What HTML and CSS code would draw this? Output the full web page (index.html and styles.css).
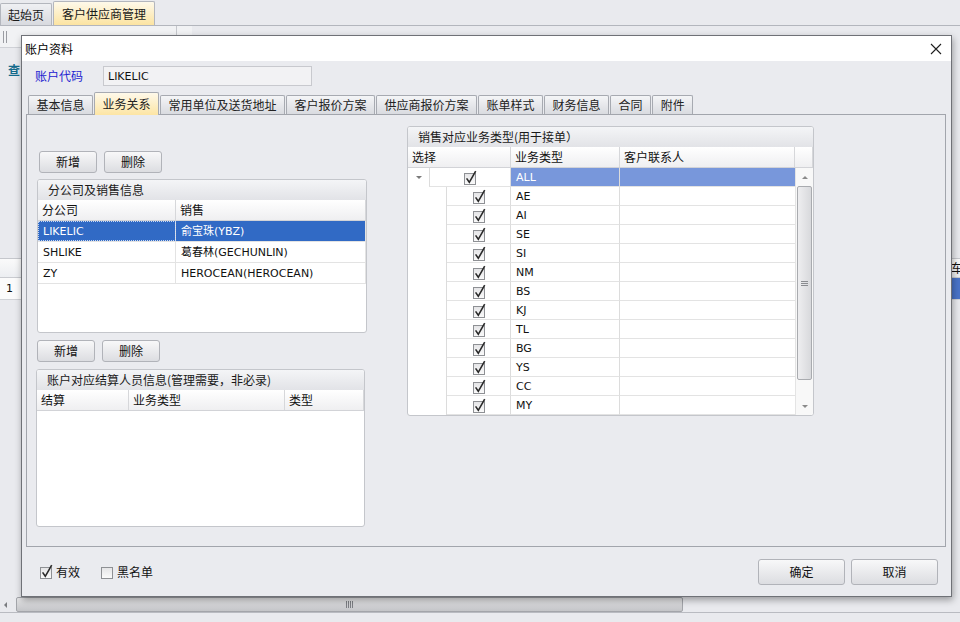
FILE: index.html
```html
<!doctype html>
<html lang="zh-CN">
  <head>
    <meta charset="utf-8" />
    <meta name="viewport" content="width=device-width, initial-scale=1.0" />
    <title>账户资料</title>
    <link rel="stylesheet" href="styles.css">
  </head>

  <body>
    <svg class="svg_defs" width="0" height="0" aria-hidden="true">
      <defs>
        <linearGradient id="box_fill" x1="0" y1="0" x2="0" y2="1">
          <stop offset="0" stop-color="#e4e4e6" />
          <stop offset="1" stop-color="#fbfbfb" />
        </linearGradient>
        <symbol id="chk_on" viewBox="0 0 14 15">
          <rect x="1.5" y="3.5" width="11" height="11" fill="url(#box_fill)" stroke="#8e9094" />
          <path d="M3.6 8.4 L6.3 12.3 L12.7 1.2" fill="none" stroke="#2a2a2a" stroke-width="1.6" />
        </symbol>
        <symbol id="chk_off" viewBox="0 0 14 15">
          <rect x="1.5" y="3.5" width="11" height="11" fill="url(#box_fill)" stroke="#8e9094" />
        </symbol>
      </defs>
    </svg>

    <!-- 뒤쪽 메인 화면 -->
    <div class="app">
      <div class="app_tabs">
        <div class="app_tab">起始页</div>
        <div class="app_tab app_tab_active">客户供应商管理</div>
      </div>
      <div class="app_toolbar">
        <div class="toolbar_strip">
          <span class="toolbar_grip"></span>
          <span class="toolbar_sep"></span>
        </div>
      </div>
      <div class="app_query"><span class="query_link">查</span></div>
      <div class="app_grid">
        <div class="app_grid_head"><span>车</span></div>
        <div class="app_grid_row">
          <span class="app_row_no latin">1</span>
          <span class="app_grid_sel"></span>
        </div>
      </div>
      <div class="app_hscroll">
        <div class="hscroll_arrow"></div>
        <div class="hscroll_thumb"><span class="hscroll_grip"></span></div>
      </div>
      <div class="app_status"></div>
    </div>

    <!-- 账户资料 dialog -->
    <div class="dialog">
      <div class="dialog_title">
        <span>账户资料</span>
        <svg class="dialog_close" width="12" height="12" viewBox="0 0 12 12">
          <path d="M1 1 L11 11 M11 1 L1 11" stroke="#1e1e1e" stroke-width="1.1" fill="none" />
        </svg>
      </div>

      <div class="dialog_body">
        <div class="acct_row">
          <div class="acct_label">账户代码</div>
          <div class="acct_input latin">LIKELIC</div>
        </div>

        <div class="tabs">
          <div class="tab">基本信息</div>
          <div class="tab tab_active">业务关系</div>
          <div class="tab">常用单位及送货地址</div>
          <div class="tab">客户报价方案</div>
          <div class="tab">供应商报价方案</div>
          <div class="tab">账单样式</div>
          <div class="tab">财务信息</div>
          <div class="tab">合同</div>
          <div class="tab">附件</div>
        </div>

        <div class="tab_panel">
          <div class="left_col">
            <div class="btn_row">
              <div class="btn">新增</div>
              <div class="btn">删除</div>
            </div>

            <div class="group group_branch">
              <div class="group_caption">分公司及销售信息</div>
              <div class="grid_head">
                <div class="cell col_branch">分公司</div>
                <div class="cell col_sales">销售</div>
              </div>
              <div class="grid_row row_selected">
                <div class="cell col_branch cell_focus latin">LIKELIC</div>
                <div class="cell col_sales latin">俞宝珠(YBZ)</div>
              </div>
              <div class="grid_row">
                <div class="cell col_branch latin">SHLIKE</div>
                <div class="cell col_sales latin">葛春林(GECHUNLIN)</div>
              </div>
              <div class="grid_row">
                <div class="cell col_branch latin">ZY</div>
                <div class="cell col_sales latin">HEROCEAN(HEROCEAN)</div>
              </div>
            </div>

            <div class="btn_row btn_row_lower">
              <div class="btn">新增</div>
              <div class="btn">删除</div>
            </div>

            <div class="group group_settle">
              <div class="group_caption">账户对应结算人员信息(管理需要，非必录)</div>
              <div class="grid_head">
                <div class="cell col_settle">结算</div>
                <div class="cell col_biz">业务类型</div>
                <div class="cell col_kind">类型</div>
              </div>
            </div>
          </div>

          <div class="group group_types">
            <div class="group_caption caption_tall">销售对应业务类型(用于接单）</div>
            <div class="grid_head">
              <div class="cell col_pick">选择</div>
              <div class="cell col_type">业务类型</div>
              <div class="cell col_contact">客户联系人</div>
              <div class="cell col_vscroll"></div>
            </div>
            <div class="types_body">
              <div class="types_rows">
                <div class="type_row type_selected">
                  <div class="pick_expander"><span class="expander_arrow"></span></div>
                  <div class="pick_box"><svg width="14" height="15"><use href="#chk_on" /></svg></div>
                  <div class="cell col_type latin">ALL</div>
                  <div class="cell col_contact"></div>
                </div>
                <div class="type_row">
                  <div class="pick_indent"></div>
                  <div class="pick_box pick_child"><svg width="14" height="15"><use href="#chk_on" /></svg></div>
                  <div class="cell col_type latin">AE</div>
                  <div class="cell col_contact"></div>
                </div>
                <div class="type_row">
                  <div class="pick_indent"></div>
                  <div class="pick_box pick_child"><svg width="14" height="15"><use href="#chk_on" /></svg></div>
                  <div class="cell col_type latin">AI</div>
                  <div class="cell col_contact"></div>
                </div>
                <div class="type_row">
                  <div class="pick_indent"></div>
                  <div class="pick_box pick_child"><svg width="14" height="15"><use href="#chk_on" /></svg></div>
                  <div class="cell col_type latin">SE</div>
                  <div class="cell col_contact"></div>
                </div>
                <div class="type_row">
                  <div class="pick_indent"></div>
                  <div class="pick_box pick_child"><svg width="14" height="15"><use href="#chk_on" /></svg></div>
                  <div class="cell col_type latin">SI</div>
                  <div class="cell col_contact"></div>
                </div>
                <div class="type_row">
                  <div class="pick_indent"></div>
                  <div class="pick_box pick_child"><svg width="14" height="15"><use href="#chk_on" /></svg></div>
                  <div class="cell col_type latin">NM</div>
                  <div class="cell col_contact"></div>
                </div>
                <div class="type_row">
                  <div class="pick_indent"></div>
                  <div class="pick_box pick_child"><svg width="14" height="15"><use href="#chk_on" /></svg></div>
                  <div class="cell col_type latin">BS</div>
                  <div class="cell col_contact"></div>
                </div>
                <div class="type_row">
                  <div class="pick_indent"></div>
                  <div class="pick_box pick_child"><svg width="14" height="15"><use href="#chk_on" /></svg></div>
                  <div class="cell col_type latin">KJ</div>
                  <div class="cell col_contact"></div>
                </div>
                <div class="type_row">
                  <div class="pick_indent"></div>
                  <div class="pick_box pick_child"><svg width="14" height="15"><use href="#chk_on" /></svg></div>
                  <div class="cell col_type latin">TL</div>
                  <div class="cell col_contact"></div>
                </div>
                <div class="type_row">
                  <div class="pick_indent"></div>
                  <div class="pick_box pick_child"><svg width="14" height="15"><use href="#chk_on" /></svg></div>
                  <div class="cell col_type latin">BG</div>
                  <div class="cell col_contact"></div>
                </div>
                <div class="type_row">
                  <div class="pick_indent"></div>
                  <div class="pick_box pick_child"><svg width="14" height="15"><use href="#chk_on" /></svg></div>
                  <div class="cell col_type latin">YS</div>
                  <div class="cell col_contact"></div>
                </div>
                <div class="type_row">
                  <div class="pick_indent"></div>
                  <div class="pick_box pick_child"><svg width="14" height="15"><use href="#chk_on" /></svg></div>
                  <div class="cell col_type latin">CC</div>
                  <div class="cell col_contact"></div>
                </div>
                <div class="type_row">
                  <div class="pick_indent"></div>
                  <div class="pick_box pick_child"><svg width="14" height="15"><use href="#chk_on" /></svg></div>
                  <div class="cell col_type latin">MY</div>
                  <div class="cell col_contact"></div>
                </div>
              </div>
              <div class="vscroll">
                <div class="vscroll_up"></div>
                <div class="vscroll_thumb"><span class="vscroll_grip"></span></div>
                <div class="vscroll_track"></div>
                <div class="vscroll_down"></div>
              </div>
            </div>
          </div>
        </div>

        <div class="dialog_footer">
          <div class="check_item">
            <svg width="14" height="15"><use href="#chk_on" /></svg>
            <span>有效</span>
          </div>
          <div class="check_item">
            <svg width="14" height="15"><use href="#chk_off" /></svg>
            <span>黑名单</span>
          </div>
          <div class="footer_btns">
            <div class="btn btn_large">确定</div>
            <div class="btn btn_large">取消</div>
          </div>
        </div>
      </div>
    </div>
  </body>
</html>
```

FILE: styles.css
```css
* {
  box-sizing: border-box;
}

body {
  margin: 0;
  width: 960px;
  height: 622px;
  overflow: hidden;
  position: relative;
  background-color: #e9eaee;
  font-family: "Noto Sans CJK SC", sans-serif;
  font-size: 12px;
  line-height: 1;
  color: #111;
}

.svg_defs {
  position: absolute;
  width: 0;
  height: 0;
}

/* 영문 데이터는 Tahoma 비슷하게 */
.latin {
  font-family: "DejaVu Sans", "Noto Sans CJK SC", sans-serif;
  font-size: 11px;
}

/* ===== background app ===== */
.app {
  display: flex;
  flex-direction: column;
  height: 622px;
}

.app_tabs {
  display: flex;
  align-items: flex-end;
  height: 26px;
  flex: none;
  border-bottom: 1px solid #b3b6bd;
}

.app_tab {
  height: 22px;
  padding: 0 7px;
  display: flex;
  align-items: center;
  border: 1px solid #b3b6bd;
  border-bottom: none;
  border-top-left-radius: 2px;
  border-top-right-radius: 2px;
  background: linear-gradient(#eff0f3, #d8dadf);
  color: #1a1a1a;
}

.app_tab_active {
  height: 24px;
  margin-left: 1px;
  padding: 0 8px;
  background: linear-gradient(#fef9ea, #fce4a2);
}

.app_toolbar {
  height: 22px;
  flex: none;
  display: flex;
}

.toolbar_strip {
  width: 192px;
  display: flex;
  align-items: center;
  background-color: #f1f2f4;
  border-bottom: 1px solid #cfd1d6;
}

.toolbar_grip {
  width: 4px;
  height: 12px;
  margin-left: 3px;
  border-left: 1px solid #9a9ca2;
  border-right: 1px solid #9a9ca2;
}

.toolbar_sep {
  width: 1px;
  height: 100%;
  margin-left: auto;
  margin-right: 15px;
  background-color: #c5c7cc;
}

.app_query {
  height: 44px;
  flex: none;
  display: flex;
  align-items: center;
  padding-left: 8px;
}

.query_link {
  color: #146b8c;
  font-weight: bold;
}

.app_grid {
  margin-top: 166px;
  flex: none;
  border-top: 1px solid #c5c7cc;
}

.app_grid_head {
  height: 19px;
  display: flex;
  align-items: center;
  padding-left: 951px;
  white-space: nowrap;
  background: linear-gradient(#fafafa, #eceef1);
  border-bottom: 1px solid #c9cbd0;
}

.app_grid_row {
  height: 22px;
  display: flex;
  background-color: #fbfbfb;
  border-bottom: 1px solid #d0d2d6;
}

.app_row_no {
  width: 20px;
  padding-left: 6px;
  display: flex;
  align-items: center;
}

.app_grid_sel {
  margin-left: auto;
  width: 8px;
  background-color: #4a74c9;
}

.app_hscroll {
  margin-top: auto;
  height: 16px;
  flex: none;
  display: flex;
  border-bottom: 1px solid #b9bbc1;
}

.hscroll_arrow {
  width: 16px;
  display: flex;
  align-items: center;
  padding-left: 4px;
}

.hscroll_arrow::before {
  content: "";
  border-right: 3px solid #7a7c80;
  border-top: 3px solid transparent;
  border-bottom: 3px solid transparent;
}

.hscroll_thumb {
  width: 667px;
  border: 1px solid #a3a5aa;
  border-radius: 2px;
  background: linear-gradient(#e6e6e8, #c3c4c7);
  display: flex;
  align-items: center;
  justify-content: center;
}

.hscroll_grip {
  width: 7px;
  height: 7px;
  background: repeating-linear-gradient(90deg, #7d7f84 0 1px, transparent 1px 2px);
}

.app_status {
  height: 9px;
  flex: none;
}

/* ===== dialog ===== */
.dialog {
  position: absolute;
  left: 21px;
  top: 35px;
  width: 931px;
  height: 562px;
  display: flex;
  flex-direction: column;
  border: 1px solid #6f7177;
  background-color: #eaebef;
  box-shadow: 1px 3px 7px rgba(0, 0, 0, 0.35);
}

.dialog_title {
  height: 25px;
  flex: none;
  display: flex;
  align-items: center;
  padding-left: 3px;
  padding-right: 9px;
  background-color: #fff;
  color: #000;
}

.dialog_close {
  margin-left: auto;
}

.dialog_body {
  flex: 1;
  display: flex;
  flex-direction: column;
}

.acct_row {
  height: 20px;
  flex: none;
  display: flex;
  align-items: center;
  margin: 5px 0 0 13px;
}

.acct_label {
  width: 68px;
  color: #2222cf;
}

.acct_input {
  width: 209px;
  height: 20px;
  display: flex;
  align-items: center;
  padding-left: 4px;
  border: 1px solid #c8c9ce;
  background-color: #f2f2f4;
}

.tabs {
  height: 23px;
  flex: none;
  display: flex;
  align-items: flex-end;
  gap: 1px;
  margin: 5px 0 0 6px;
  position: relative;
  z-index: 1;
}

.tab {
  height: 19px;
  padding: 0 7.5px;
  display: flex;
  align-items: center;
  border: 1px solid #a7aab1;
  border-bottom: none;
  border-top-left-radius: 2px;
  border-top-right-radius: 2px;
  background: linear-gradient(#f4f5f7, #d9dbe0);
  color: #222;
}

.tab_active {
  height: 23px;
  margin-bottom: -1px;
  background: linear-gradient(#fef9ea, #fde5a4);
}

.tab_panel {
  width: 920px;
  height: 433px;
  flex: none;
  margin-left: 4px;
  display: flex;
  align-items: flex-start;
  padding: 11px 0 0 9px;
  border: 1px solid #a2a5ac;
}

.left_col {
  width: 331px;
  margin-top: 25px;
  display: flex;
  flex-direction: column;
  align-items: flex-start;
}

.btn_row {
  display: flex;
  gap: 7px;
  margin-left: 3px;
}

.btn_row_lower {
  margin: 7px 0 0 1px;
}

.btn {
  width: 58px;
  height: 22px;
  display: flex;
  justify-content: center;
  align-items: center;
  border: 1px solid #b1b3b9;
  border-radius: 3px;
  background: linear-gradient(#f8f8f9, #dcdde1);
  color: #111;
}

.group {
  display: flex;
  flex-direction: column;
  overflow: hidden;
  border: 1px solid #c4c6cb;
  border-radius: 3px;
  background-color: #fff;
}

.group_caption {
  height: 20px;
  flex: none;
  display: flex;
  align-items: center;
  padding-left: 10px;
  background: linear-gradient(#f4f5f7, #e2e3e7);
  color: #1a1a1a;
}

.caption_tall {
  height: 20px;
}

.group_branch {
  width: 330px;
  height: 154px;
  margin: 6px 0 0 1px;
}

.group_settle {
  width: 329px;
  height: 158px;
  margin-top: 7px;
}

.group_types {
  width: 407px;
  margin-left: 40px;
}

.grid_head {
  height: 21px;
  flex: none;
  display: flex;
  background: linear-gradient(#ffffff, #efeff1);
  border-bottom: 1px solid #d2d3d7;
}

.grid_head .cell {
  border-right: 1px solid #d6d7da;
}

.cell {
  height: 100%;
  display: flex;
  align-items: center;
  padding-left: 4px;
  white-space: nowrap;
  overflow: hidden;
}

.grid_row {
  height: 21px;
  flex: none;
  display: flex;
  border-bottom: 1px solid #e3e3e3;
}

.grid_row .cell {
  border-right: 1px solid #e3e3e3;
  padding-left: 5px;
}

.row_selected {
  background-color: #316ac5;
  color: #fff;
}

.cell_focus {
  outline: 1px dotted #c9d8f2;
  outline-offset: -1px;
}

.col_branch {
  width: 138px;
}
.col_sales {
  flex: 1;
}
.col_settle {
  width: 92px;
}
.col_biz {
  width: 156px;
}
.col_kind {
  flex: 1;
}
.col_pick {
  width: 103px;
}
.col_type {
  width: 109px;
}
.col_contact {
  width: 175px;
}
.col_vscroll {
  flex: 1;
}

/* 业务类型 grid */
.types_body {
  display: flex;
}

.types_rows {
  width: 387px;
}

.type_row {
  height: 19px;
  display: flex;
}

.type_row .cell {
  border-right: 1px solid #dcdcdc;
  border-bottom: 1px solid #e3e3e3;
  padding-left: 5px;
}

.type_row .col_contact {
  border-right: none;
}

.type_selected .col_type,
.type_selected .col_contact {
  background-color: #7897db;
  color: #fff;
}

.pick_expander {
  width: 21px;
  display: flex;
  justify-content: center;
  align-items: center;
}

.expander_arrow {
  border-top: 3px solid #7a7a7a;
  border-left: 3px solid transparent;
  border-right: 3px solid transparent;
}

.pick_indent {
  width: 39px;
  border-right: 1px solid #dcdcdc;
}

.pick_box {
  width: 82px;
  display: flex;
  justify-content: center;
  align-items: center;
  border-left: 1px solid #dcdcdc;
  border-right: 1px solid #dcdcdc;
  border-bottom: 1px solid #e3e3e3;
}

.pick_child {
  width: 64px;
  border-left: none;
}

.vscroll {
  width: 18px;
  display: flex;
  flex-direction: column;
  align-items: center;
  background-color: #f8f8f8;
  border-left: 1px solid #e4e4e4;
}

.vscroll_up,
.vscroll_down {
  width: 100%;
  height: 18px;
  flex: none;
  display: flex;
  justify-content: center;
  align-items: center;
}

.vscroll_up::before {
  content: "";
  border-bottom: 3px solid #8a8a8a;
  border-left: 3px solid transparent;
  border-right: 3px solid transparent;
}

.vscroll_down::before {
  content: "";
  border-top: 3px solid #8a8a8a;
  border-left: 3px solid transparent;
  border-right: 3px solid transparent;
}

.vscroll_thumb {
  width: 15px;
  height: 194px;
  flex: none;
  display: flex;
  justify-content: center;
  align-items: center;
  border: 1px solid #a9abaf;
  border-radius: 2px;
  background: linear-gradient(90deg, #eeeef0, #d8d9dc);
}

.vscroll_grip {
  width: 7px;
  height: 5px;
  background: repeating-linear-gradient(#8a8c90 0 1px, transparent 1px 2px);
}

.vscroll_track {
  flex: 1;
}

/* footer */
.dialog_footer {
  height: 49px;
  flex: none;
  display: flex;
  align-items: center;
  padding: 0 13px 0 17px;
}

.check_item {
  display: flex;
  align-items: center;
  gap: 3px;
  margin-right: 20px;
}

.footer_btns {
  margin-left: auto;
  display: flex;
  gap: 6px;
}

.btn_large {
  width: 87px;
  height: 26px;
}
```
